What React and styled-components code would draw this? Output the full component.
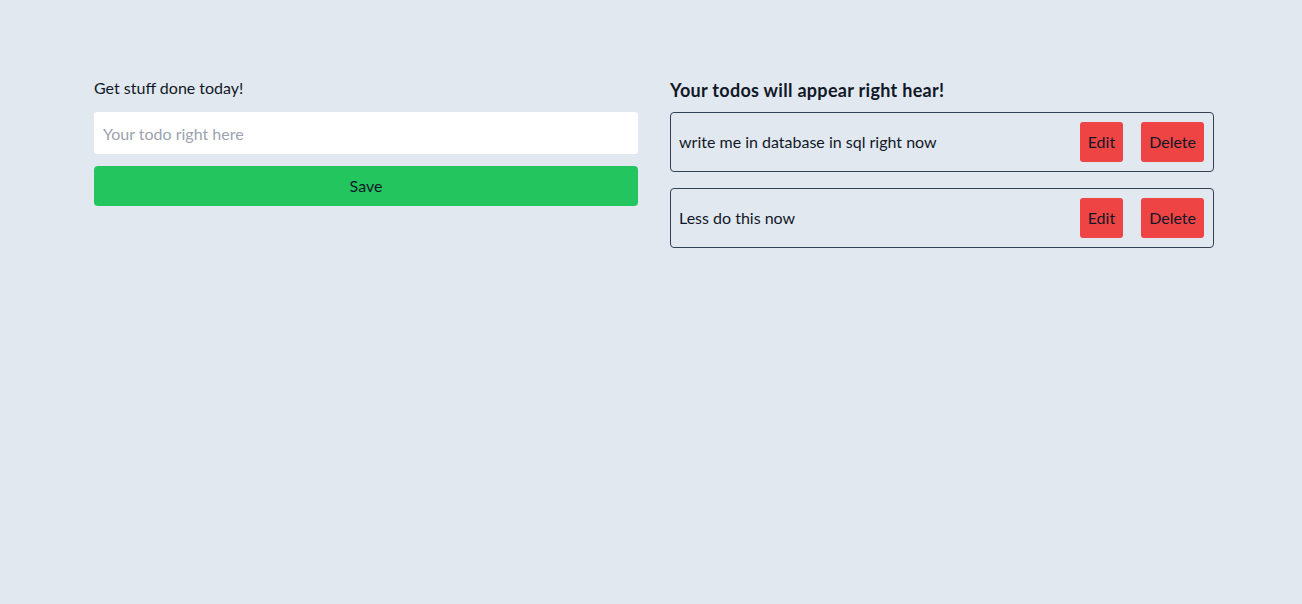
import styled, { createGlobalStyle } from 'styled-components';

const GlobalStyle = createGlobalStyle`
    * { box-sizing: border-box; }
    body {
        margin: 0;
        background: #e2e8f0;
        font-family: Lato, "Noto Sans", sans-serif;
        font-size: 16px;
        line-height: 24px;
        color: #111827;
    }
`;

const todos = [
    { id: 1, text: 'write me in database in sql right now' },
    { id: 2, text: 'Less do this now' }
];

const App = () => {
    return (
        <Page>
            <GlobalStyle />
            <Columns>
                <Column>
                    <Label htmlFor="todo">Get stuff done today!</Label>
                    <Input id="todo" placeholder="Your todo right here" />
                    <SaveButton>Save</SaveButton>
                </Column>
                <Column>
                    <Heading>Your todos will appear right hear!</Heading>
                    <List>
                        {todos.map((item) => (
                            <Card key={item.id}>
                                <CardText>{item.text}</CardText>
                                <Actions>
                                    <DangerButton>Edit</DangerButton>
                                    <DangerButton>Delete</DangerButton>
                                </Actions>
                            </Card>
                        ))}
                    </List>
                </Column>
            </Columns>
        </Page>
    );
};

const Page = styled.div`
    min-height: 604px;
    padding: 76px 88px 0 94px;
`;

const Columns = styled.div`
    display: grid;
    grid-template-columns: 544px 544px;
    column-gap: 32px;
`;

const Column = styled.div`
    display: flex;
    flex-direction: column;
`;

const Label = styled.label`
    display: block;
    margin-bottom: 12px;
`;

const Input = styled.input`
    height: 42px;
    border: none;
    border-radius: 3px;
    background: #ffffff;
    padding: 0 9px;
    font: inherit;
    outline: none;
    &::placeholder {
        color: #9ca3af;
    }
`;

const SaveButton = styled.button`
    margin-top: 12px;
    height: 40px;
    border: none;
    border-radius: 4px;
    background: #22c55e;
    font: inherit;
    color: #111827;
`;

const Heading = styled.h2`
    margin: 0 0 8px;
    font-size: 18px;
    line-height: 28px;
    font-weight: 700;
    letter-spacing: 0.3px;
`;

const List = styled.div`
    display: flex;
    flex-direction: column;
    gap: 16px;
`;

const Card = styled.div`
    display: flex;
    align-items: center;
    justify-content: space-between;
    height: 60px;
    padding: 0 9px 0 8px;
    border: 1px solid #334155;
    border-radius: 4px;
`;

const CardText = styled.span``;

const Actions = styled.div`
    display: flex;
    gap: 18px;
`;

const DangerButton = styled.button`
    height: 40px;
    padding: 0 8px;
    border: none;
    border-radius: 3px;
    background: #ef4444;
    font: inherit;
    color: #111827;
`;

export default App;
